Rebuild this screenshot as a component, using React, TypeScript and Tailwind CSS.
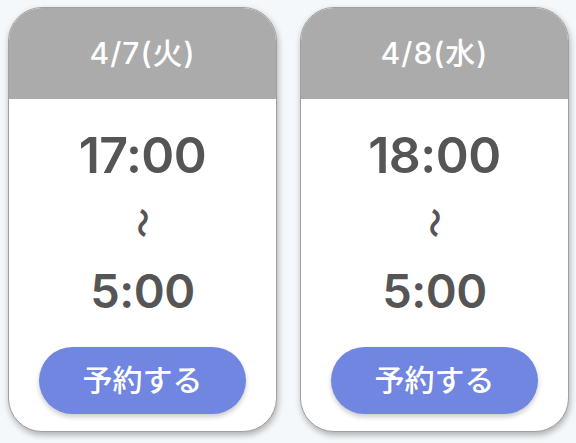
import React from 'react';

const slots = [
  { date: '4/7(火)', start: '17:00', end: '5:00' },
  { date: '4/8(水)', start: '18:00', end: '5:00' },
];

const font = { fontFamily: 'Inter, "Noto Sans CJK JP", sans-serif' };

const App = () => {
  return (
    <div className="w-[576px] h-[443px] bg-[#f5f8fa] overflow-hidden" style={font}>
      <div className="flex gap-[23px] pl-[8px] pt-[7px]">
        {slots.map((s) => (
          <div
            key={s.date}
            className="w-[269px] h-[425px] bg-white rounded-[34px] border border-[#a0a0a0] shadow-[1px_3px_6px_rgba(0,0,0,0.3)] overflow-hidden flex flex-col"
          >
            <div className="h-[91px] shrink-0 bg-[#ababab] flex items-center justify-center">
              <span className="text-white text-[30px] font-medium tracking-[1px]">{s.date}</span>
            </div>
            <div className="flex flex-col items-center flex-1">
              <div className="mt-[27px] h-[58px] flex items-center text-[50px] font-semibold text-[#555555] leading-none tracking-[-0.5px]">
                {s.start}
              </div>
              <div className="mt-[27px] h-[24px] flex items-center justify-center">
                <span className="inline-block rotate-90 text-[30px] font-bold text-[#555555] leading-none">〜</span>
              </div>
              <div className="mt-[26px] h-[58px] flex items-center text-[47px] font-semibold text-[#555555] leading-none tracking-[-0.5px]">
                {s.end}
              </div>
              <button className="mt-[28px] w-[207px] h-[67px] rounded-full bg-[#7086e0] text-white text-[30px] font-medium shadow-[0_3px_5px_rgba(0,0,0,0.2)]">
                予約する
              </button>
            </div>
          </div>
        ))}
      </div>
    </div>
  );
};

export default App;
